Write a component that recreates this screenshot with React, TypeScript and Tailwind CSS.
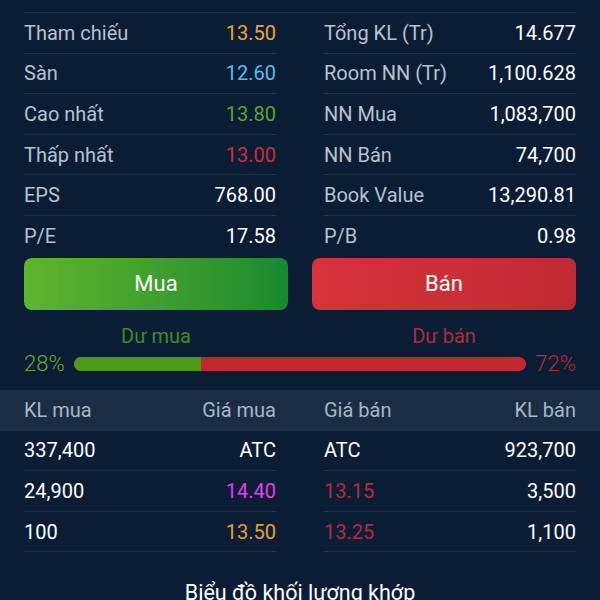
const font = { fontFamily: "Roboto, 'Noto Sans', sans-serif" };

type Stat = { label: string; value: string; color: string };

const leftStats: Stat[] = [
  { label: "Tham chiếu", value: "13.50", color: "text-[#e6a62c]" },
  { label: "Sàn", value: "12.60", color: "text-[#4cc0ef]" },
  { label: "Cao nhất", value: "13.80", color: "text-[#58a530]" },
  { label: "Thấp nhất", value: "13.00", color: "text-[#c4303c]" },
  { label: "EPS", value: "768.00", color: "text-white" },
  { label: "P/E", value: "17.58", color: "text-white" },
];

const rightStats: Stat[] = [
  { label: "Tổng KL (Tr)", value: "14.677", color: "text-white" },
  { label: "Room NN (Tr)", value: "1,100.628", color: "text-white" },
  { label: "NN Mua", value: "1,083,700", color: "text-white" },
  { label: "NN Bán", value: "74,700", color: "text-white" },
  { label: "Book Value", value: "13,290.81", color: "text-white" },
  { label: "P/B", value: "0.98", color: "text-white" },
];

const orders = [
  { buyVol: "337,400", buyPrice: "ATC", buyColor: "text-white", sellPrice: "ATC", sellColor: "text-white", sellVol: "923,700" },
  { buyVol: "24,900", buyPrice: "14.40", buyColor: "text-[#e040f0]", sellPrice: "13.15", sellColor: "text-[#b02d3c]", sellVol: "3,500" },
  { buyVol: "100", buyPrice: "13.50", buyColor: "text-[#e0a42a]", sellPrice: "13.25", sellColor: "text-[#b02d3c]", sellVol: "1,100" },
];

const StatColumn = ({ items }: { items: Stat[] }) => (
  <div className="flex flex-col">
    {items.map((s, i) => (
      <div
        key={i}
        className={`h-[40.6px] flex items-center justify-between ${
          i === items.length - 1 ? "" : "border-b border-[#1d3250]"
        }`}
      >
        <span className="text-[#b7c2ce]">{s.label}</span>
        <span className={s.color}>{s.value}</span>
      </div>
    ))}
  </div>
);

export default function App() {
  return (
    <div
      className="w-[600px] h-[600px] overflow-hidden bg-[#0b1d35] text-[20px] leading-none"
      style={font}
    >
      <div className="px-6 pt-3">
        <div className="grid grid-cols-2 gap-x-12 border-t border-[#1d3250]">
          <StatColumn items={leftStats} />
          <StatColumn items={rightStats} />
        </div>

        <div className="grid grid-cols-2 gap-6 mt-px">
          <button className="h-[52px] rounded-lg bg-gradient-to-r from-[#5fb52b] to-[#158a2f] text-white text-[22px]">
            Mua
          </button>
          <button className="h-[52px] rounded-lg bg-gradient-to-r from-[#d8333c] to-[#bf2a32] text-white text-[22px]">
            Bán
          </button>
        </div>

        <div className="grid grid-cols-2 gap-6 mt-[14px] h-6 items-center">
          <div className="text-center text-[#3f8a2c]">Dư mua</div>
          <div className="text-center text-[#a3303a]">Dư bán</div>
        </div>

        <div className="flex items-center gap-2 mt-[3px] h-[26px]">
          <span className="w-[42px] text-[22px] font-light text-[#68a83a]">28%</span>
          <div className="flex-1 h-[14px] rounded-full overflow-hidden flex bg-[#c0282f]">
            <div className="h-full bg-[#4b9a18]" style={{ width: "28%" }} />
          </div>
          <span className="w-[42px] text-right text-[22px] font-light text-[#b0303a]">72%</span>
        </div>
      </div>

      <div className="mt-[13px] h-[41px] bg-[#1a2d45] px-6 grid grid-cols-2 gap-x-12 items-center text-[#a8b5c3]">
        <div className="flex justify-between">
          <span>KL mua</span>
          <span>Giá mua</span>
        </div>
        <div className="flex justify-between">
          <span>Giá bán</span>
          <span>KL bán</span>
        </div>
      </div>

      <div className="px-6 flex flex-col">
        {orders.map((o, i) => (
          <div key={i} className="grid grid-cols-2 gap-x-12 text-white">
            <div className="h-[40.6px] flex items-center justify-between border-b border-[#1d3250]">
              <span>{o.buyVol}</span>
              <span className={o.buyColor}>{o.buyPrice}</span>
            </div>
            <div className="h-[40.6px] flex items-center justify-between border-b border-[#1d3250]">
              <span className={o.sellColor}>{o.sellPrice}</span>
              <span>{o.sellVol}</span>
            </div>
          </div>
        ))}
      </div>

      <div className="mt-[30px] text-center text-white text-[21.5px]">Biểu đồ khối lượng khớp</div>
    </div>
  );
}
